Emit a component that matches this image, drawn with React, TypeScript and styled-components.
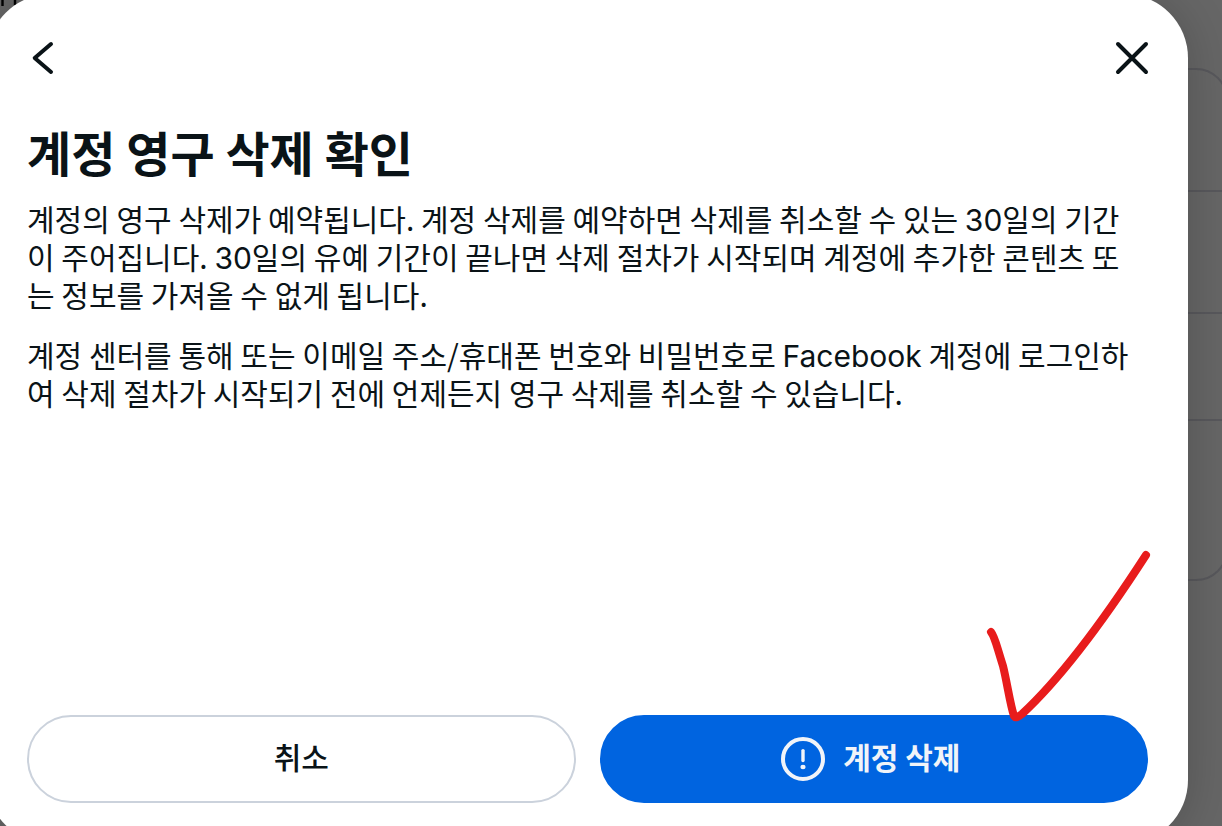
import React from "react";
import styled, { createGlobalStyle } from "styled-components";

const GlobalStyle = createGlobalStyle`
  *, *::before, *::after { box-sizing: border-box; }
  body {
    margin: 0;
    color: #0a1317;
    font-family: "Noto Sans CJK KR", "Noto Sans", sans-serif;
  }
`;

const Screen = styled.div`
  display: grid;
  grid-template: minmax(100vh, auto) / minmax(0, 1fr);
  overflow: hidden;
  min-height: 100vh;
  background: #666666;
`;

const Layer = styled.div`
  grid-area: 1 / 1;
  min-width: 0;
`;

const PageStrokes = styled.svg`
  display: block;
  width: 24px;
  height: 8px;
`;

const SettingsCard = styled.div`
  margin: 60px -6px 0 40px;
  border: 2px solid #58585c;
  border-radius: 32px;
`;

const SettingsRow = styled.div<{ $height: number }>`
  height: ${({ $height }) => $height}px;
  & + & { border-top: 2px solid #58585c; }
`;

const Dialog = styled.section`
  grid-area: 1 / 1;
  position: relative;
  display: flex;
  flex-direction: column;
  margin: -6px 34px -18px -13px;
  padding: 36px 40px 41px;
  border-radius: 64px;
  background: #ffffff;
  box-shadow: 0 4px 48px rgba(0, 0, 0, 0.2);
`;

const Toolbar = styled.header`
  display: flex;
  justify-content: space-between;
  margin: 0 -8px;
`;

const IconButton = styled.button`
  display: grid;
  place-items: center;
  width: 48px;
  height: 56px;
  padding: 0;
  border: 0;
  background: none;
  color: inherit;
  cursor: pointer;
`;

const Title = styled.h1`
  margin: 35px 0 0;
  font-size: 48px;
  line-height: 60px;
  font-weight: 700;
`;

const Copy = styled.div`
  margin-top: 18px;
  padding-right: 8px;
`;

const Paragraph = styled.p`
  margin: 0;
  font-size: 30px;
  line-height: 38px;
  & + & { margin-top: 22px; }
`;

const Latin = styled.span`
  font-family: Inter, sans-serif;
  line-height: 30px;
`;

const Actions = styled.footer`
  position: relative;
  display: grid;
  grid-template-columns: 1fr 1fr;
  gap: 24px;
  margin-top: auto;
`;

const ActionButton = styled.button<{ $primary?: boolean }>`
  display: flex;
  align-items: center;
  justify-content: center;
  gap: 18px;
  height: 88px;
  padding: ${({ $primary }) => ($primary ? "0 38px 0 32px" : "0 32px")};
  border: 2px solid ${({ $primary }) => ($primary ? "#0064e0" : "#cbd2dc")};
  border-radius: 44px;
  background: ${({ $primary }) => ($primary ? "#0064e0" : "#ffffff")};
  color: ${({ $primary }) => ($primary ? "#f1f4f9" : "#0a1317")};
  font-family: inherit;
  font-size: 30px;
  line-height: 38px;
  font-weight: ${({ $primary }) => ($primary ? 700 : 500)};
  cursor: pointer;
`;

const ActionLabel = styled.span`
  padding-bottom: 6px;
`;

const CheckMark = styled.svg`
  position: absolute;
  right: -8px;
  bottom: 72px;
  width: 176px;
  height: 186px;
  pointer-events: none;
`;

const rows = [120, 122, 107, 160];

export default function App() {
  return (
    <Screen>
      <GlobalStyle />
      <Layer aria-hidden="true">
        <PageStrokes viewBox="0 0 24 8">
          <path d="M2.5 0V6M15 0V5" stroke="#000000" strokeWidth="2.4" />
        </PageStrokes>
        <SettingsCard>
          {rows.map((height) => (
            <SettingsRow key={height} $height={height} />
          ))}
        </SettingsCard>
      </Layer>
      <Dialog role="dialog" aria-modal="true" aria-labelledby="dialog-title">
        <Toolbar>
          <IconButton type="button" aria-label="뒤로">
            <svg width="48" height="48" viewBox="0 0 48 48" fill="none" stroke="currentColor" strokeWidth="4" strokeLinecap="round" strokeLinejoin="round">
              <path d="M32 10L15.7 24L32 38" />
            </svg>
          </IconButton>
          <IconButton type="button" aria-label="닫기">
            <svg width="48" height="48" viewBox="0 0 48 48" fill="none" stroke="currentColor" strokeWidth="4" strokeLinecap="round">
              <path d="M10 10L38 38M38 10L10 38" />
            </svg>
          </IconButton>
        </Toolbar>
        <Title id="dialog-title">계정 영구 삭제 확인</Title>
        <Copy>
          <Paragraph>
            계정의 영구 삭제가 예약됩니다. 계정 삭제를 예약하면 삭제를 취소할 수 있는 <Latin>30</Latin>일의
            기간이 주어집니다. <Latin>30</Latin>일의 유예 기간이 끝나면 삭제 절차가 시작되며 계정에 추가한
            콘텐츠 또는 정보를 가져올 수 없게 됩니다.
          </Paragraph>
          <Paragraph>
            계정 센터를 통해 또는 이메일 주소/휴대폰 번호와 비밀번호로 <Latin>Facebook</Latin> 계정에
            로그인하여 삭제 절차가 시작되기 전에 언제든지 영구 삭제를 취소할 수 있습니다.
          </Paragraph>
        </Copy>
        <Actions>
          <ActionButton type="button">
            <ActionLabel>취소</ActionLabel>
          </ActionButton>
          <ActionButton type="button" $primary>
            <svg width="44" height="44" viewBox="0 0 44 44" fill="none" stroke="currentColor" strokeWidth="4" strokeLinecap="round" aria-hidden="true">
              <circle cx="22" cy="22" r="20" />
              <path d="M22 13.6V23.6" strokeWidth="3.4" />
              <ellipse cx="22" cy="30" rx="2.6" ry="2.2" fill="currentColor" stroke="none" />
            </svg>
            <ActionLabel>계정 삭제</ActionLabel>
          </ActionButton>
          <CheckMark viewBox="980 545 176 186" fill="none" stroke="#e81c1c" strokeWidth="8" strokeLinecap="round" strokeLinejoin="round" aria-hidden="true">
            <path d="M991 632C995 637 996 644 1003 666C1007 682 1010 704 1014 716C1016 719 1019 716 1022 714C1061 678 1104 620 1146 555" />
          </CheckMark>
        </Actions>
      </Dialog>
    </Screen>
  );
}
